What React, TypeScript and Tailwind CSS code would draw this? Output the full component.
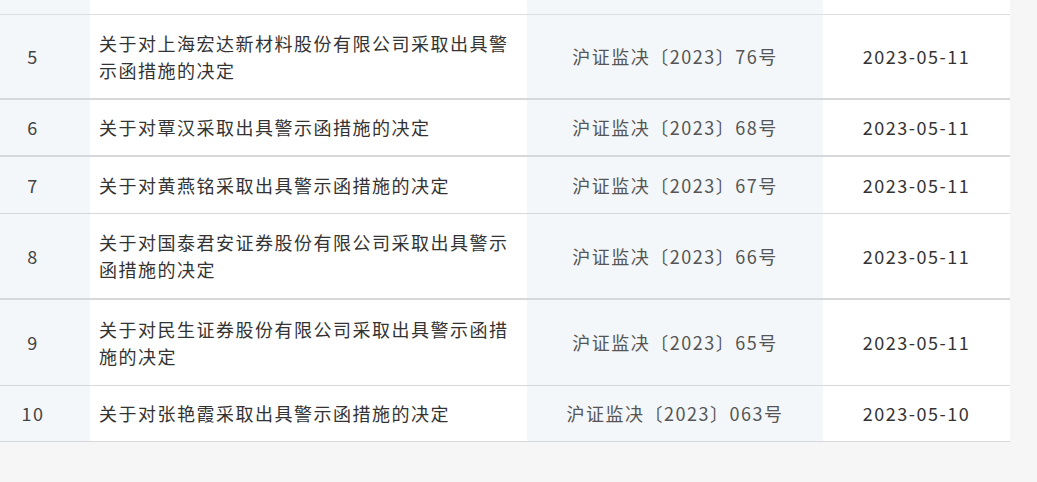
const rows = [
  { no: "5", title: "关于对上海宏达新材料股份有限公司采取出具警示函措施的决定", doc: "沪证监决〔2023〕76号", date: "2023-05-11", h: "h-[85px]", b: "border-b-2" },
  { no: "6", title: "关于对覃汉采取出具警示函措施的决定", doc: "沪证监决〔2023〕68号", date: "2023-05-11", h: "h-[57px]", b: "border-b-2" },
  { no: "7", title: "关于对黄燕铭采取出具警示函措施的决定", doc: "沪证监决〔2023〕67号", date: "2023-05-11", h: "h-[57px]", b: "border-b" },
  { no: "8", title: "关于对国泰君安证券股份有限公司采取出具警示函措施的决定", doc: "沪证监决〔2023〕66号", date: "2023-05-11", h: "h-[86px]", b: "border-b-2" },
  { no: "9", title: "关于对民生证券股份有限公司采取出具警示函措施的决定", doc: "沪证监决〔2023〕65号", date: "2023-05-11", h: "h-[86px]", b: "border-b" },
  { no: "10", title: "关于对张艳霞采取出具警示函措施的决定", doc: "沪证监决〔2023〕063号", date: "2023-05-10", h: "h-[56px]", b: "border-b" },
]

export default function App() {
  return (
    <div
      className="min-h-[482px] w-[1037px] bg-[#f6f6f6] text-[18px] leading-[27px] tracking-[1.5px] text-[#333]"
      style={{ fontFamily: '"Noto Sans CJK SC", "Noto Sans", sans-serif' }}
    >
      <div className="w-[1010px] bg-white">
        <div className="flex h-[15px] border-b border-[#dcdee0]">
          <div className="w-[90px] bg-[#f4f7fa]" />
          <div className="w-[437px]" />
          <div className="w-[296px] bg-[#f4f7fa]" />
          <div className="flex-1" />
        </div>
        {rows.map((r) => (
          <div key={r.no} className={`flex ${r.h} ${r.b} border-[#d6d8db]`}>
            <div className="flex w-[90px] items-center justify-center bg-[#f4f7fa] pr-[24px] text-[#444]">
              {r.no}
            </div>
            <div className="flex w-[437px] items-center px-[9px]">
              <span>{r.title}</span>
            </div>
            <div className="flex w-[296px] items-center justify-center bg-[#f4f7fa] text-[#555]">
              {r.doc}
            </div>
            <div className="flex flex-1 items-center justify-center text-[#333]">
              {r.date}
            </div>
          </div>
        ))}
      </div>
    </div>
  )
}
